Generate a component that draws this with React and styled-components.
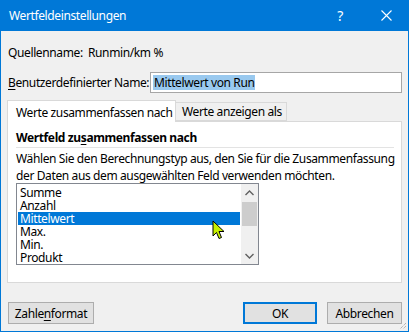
import React from "react";
import styled, { createGlobalStyle } from "styled-components";

const GlobalStyle = createGlobalStyle`
  html, body {
    margin: 0;
    padding: 0;
    background: #f0f0f0;
  }
  body {
    font-family: "Noto Sans", "Open Sans", sans-serif;
    font-size: 12px;
    letter-spacing: -0.38px;
    color: #000;
  }
`;

const Window = styled.div`
  position: relative;
  width: 409px;
  height: 332px;
  box-sizing: border-box;
  border: 1px solid #0078d7;
  border-top: none;
  background: #f0f0f0;
  display: flex;
  flex-direction: column;
  overflow: hidden;
`;

const TitleBar = styled.div`
  height: 31px;
  margin: 0 -1px;
  background: #0078d7;
  color: #fff;
  display: flex;
  align-items: center;
  padding-left: 9px;
  flex-shrink: 0;
`;

const Title = styled.div`
  flex: 1;
  font-size: 12px;
`;

const TitleButton = styled.div`
  width: 46px;
  height: 31px;
  display: flex;
  align-items: center;
  justify-content: center;
  font-size: 14px;
`;

const Body = styled.div`
  flex: 1;
  display: flex;
  flex-direction: column;
  padding: 11px 6px 0 6px;
`;

const Row = styled.div`
  display: flex;
  align-items: center;
  flex-shrink: 0;
  height: ${(p) => p.$h || 20}px;
  margin-bottom: ${(p) => p.$mb || 0}px;
  padding-left: 1px;
`;

const Label = styled.div`
  width: ${(p) => p.$w}px;
  flex-shrink: 0;
  white-space: nowrap;
`;

const Field = styled.div`
  flex: 1;
  height: 21px;
  box-sizing: border-box;
  border: 1px solid #a6a6a6;
  background: #fff;
  display: flex;
  align-items: center;
  padding-left: 2px;
`;

const Selected = styled.span`
  background: #99c9ef;
  line-height: 15px;
  padding: 0 1px;
`;

const U = styled.span`
  text-decoration: underline;
  text-underline-offset: 2px;
`;

const TabStrip = styled.div`
  display: flex;
  align-items: flex-end;
  flex-shrink: 0;
  height: 21px;
  position: relative;
  z-index: 1;
`;

const Tab = styled.div`
  box-sizing: border-box;
  width: ${(p) => p.$w}px;
  height: ${(p) => (p.$active ? 22 : 19)}px;
  margin-bottom: ${(p) => (p.$active ? -1 : 0)}px;
  border: 1px solid #d9d9d9;
  border-bottom: ${(p) => (p.$active ? "none" : "1px solid #d9d9d9")};
  border-left: ${(p) => (p.$active ? "1px solid #d9d9d9" : "none")};
  background: ${(p) => (p.$active ? "#fff" : "#f0f0f0")};
  display: flex;
  align-items: center;
  padding-left: ${(p) => (p.$active ? 8 : 6)}px;
  padding-top: ${(p) => (p.$active ? 1 : 0)}px;
  white-space: nowrap;
`;

const Panel = styled.div`
  height: 162px;
  flex-shrink: 0;
  box-sizing: border-box;
  border: 1px solid #d9d9d9;
  background: #fff;
  padding: 8px 7px 0 8px;
  display: flex;
  flex-direction: column;
`;

const GroupTitle = styled.div`
  flex-shrink: 0;
  height: 16px;
  font-weight: bold;
  line-height: 16px;
  padding-bottom: 1px;
  border-bottom: 1px solid #e3e3e3;
  margin-bottom: 2px;
`;

const Description = styled.div`
  flex-shrink: 0;
  height: 33px;
  line-height: 17px;
  white-space: nowrap;
`;

const ListBox = styled.div`
  position: relative;
  flex-shrink: 0;
  width: 243px;
  height: 82px;
  box-sizing: border-box;
  border: 1px solid #828790;
  background: #fff;
  display: flex;
`;

const Items = styled.div`
  flex: 1;
  padding: 2px 1px 0 1px;
`;

const Item = styled.div`
  height: 13px;
  line-height: 13px;
  padding-left: 2px;
  background: ${(p) => (p.$selected ? "#0078d7" : "transparent")};
  color: ${(p) => (p.$selected ? "#fff" : "#000")};
`;

const ScrollBar = styled.div`
  width: 17px;
  background: #f0f0f0;
  display: flex;
  flex-direction: column;
  align-items: center;
`;

const Arrow = styled.div`
  height: 17px;
  width: 17px;
  display: flex;
  align-items: center;
  justify-content: center;
`;

const Track = styled.div`
  flex: 1;
  width: 17px;
  display: flex;
  flex-direction: column;
`;

const Thumb = styled.div`
  height: 24px;
  width: 15px;
  margin: 1px 1px 0 1px;
  background: #cdcdcd;
`;

const Footer = styled.div`
  display: flex;
  align-items: center;
  flex-shrink: 0;
  margin-top: 19px;
  padding-left: 1px;
`;

const Spacer = styled.div`
  flex: 1;
`;

const Button = styled.div`
  box-sizing: border-box;
  width: ${(p) => p.$w}px;
  height: 22px;
  margin-left: ${(p) => p.$ml || 0}px;
  background: #e1e1e1;
  border: ${(p) => (p.$default ? "2px solid #0078d7" : "1px solid #adadad")};
  display: flex;
  align-items: center;
  justify-content: center;
  white-space: nowrap;
`;

const Cursor = styled.svg`
  position: absolute;
  left: 211px;
  top: 220px;
`;

const Grip = styled.svg`
  position: absolute;
  right: 1px;
  bottom: 1px;
`;

const items = ["Summe", "Anzahl", "Mittelwert", "Max.", "Min.", "Produkt"];

export default function App() {
  return (
    <>
      <GlobalStyle />
      <Window>
        <TitleBar>
          <Title>Wertfeldeinstellungen</Title>
          <TitleButton>?</TitleButton>
          <TitleButton>
            <svg width="11" height="11" viewBox="0 0 11 11">
              <path d="M0.5 0.5 L10.5 10.5 M10.5 0.5 L0.5 10.5" stroke="#fff" strokeWidth="1.1" />
            </svg>
          </TitleButton>
        </TitleBar>
        <Body>
          <Row $mb={10}>
            <Label $w={80}>Quellenname:</Label>
            <div>Runmin/km %</div>
          </Row>
          <Row $h={21} $mb={7}>
            <Label $w={142}>
              <U>B</U>enutzerdefinierter Name:
            </Label>
            <Field>
              <Selected>Mittelwert von Run</Selected>
            </Field>
          </Row>
          <TabStrip>
            <Tab $active $w={169}>Werte zusammenfassen nach</Tab>
            <Tab $w={111}>Werte anzeigen als</Tab>
          </TabStrip>
          <Panel>
            <GroupTitle>
              Wertfeld zu<U>s</U>ammenfassen nach
            </GroupTitle>
            <Description>
              Wählen Sie den Berechnungstyp aus, den Sie für die Zusammenfassung
              <br />
              der Daten aus dem ausgewählten Feld verwenden möchten.
            </Description>
            <ListBox>
              <Items>
                {items.map((it) => (
                  <Item key={it} $selected={it === "Mittelwert"}>
                    {it}
                  </Item>
                ))}
              </Items>
              <ScrollBar>
                <Arrow>
                  <svg width="9" height="6" viewBox="0 0 9 6">
                    <path d="M0.5 5 L4.5 1 L8.5 5" stroke="#606060" strokeWidth="1.4" fill="none" />
                  </svg>
                </Arrow>
                <Track>
                  <Thumb />
                </Track>
                <Arrow>
                  <svg width="9" height="6" viewBox="0 0 9 6">
                    <path d="M0.5 1 L4.5 5 L8.5 1" stroke="#606060" strokeWidth="1.4" fill="none" />
                  </svg>
                </Arrow>
              </ScrollBar>
            </ListBox>
          </Panel>
          <Footer>
            <Button $w={86}>
              Zahle<U>n</U>format
            </Button>
            <Spacer />
            <Button $default $w={74}>OK</Button>
            <Button $w={75} $ml={10}>Abbrechen</Button>
          </Footer>
        </Body>
        <Cursor width="14" height="20" viewBox="0 0 14 20">
          <path
            d="M1 1 L1 16 L4.5 12.5 L7 18.5 L9.5 17.5 L7 11.5 L12 11.5 Z"
            fill="#c6f000"
            stroke="#000"
            strokeWidth="1"
            strokeLinejoin="miter"
          />
        </Cursor>
        <Grip width="8" height="8" viewBox="0 0 8 8">
          <path d="M7 1 L1 7 M7 4 L4 7" stroke="#9a9a9a" strokeWidth="1" strokeDasharray="1 1" />
        </Grip>
      </Window>
    </>
  );
}
